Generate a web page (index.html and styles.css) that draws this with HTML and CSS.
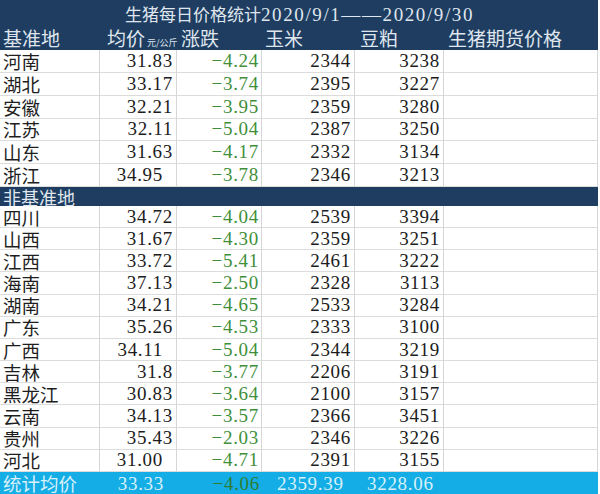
FILE: index.html
```html
<!DOCTYPE html>
<html lang="zh-CN">
<head>
<meta charset="utf-8">
<title>生猪每日价格统计</title>
<link rel="stylesheet" href="styles.css">
</head>
<body>
<div class="sheet">
  <div class="title">生猪每日价格统计<span class="date">2020/9/1——2020/9/30</span></div>
  <div class="grid head">
    <div class="h h0">基准地</div>
    <div class="h h1">均价<span class="unit">元/公斤</span></div>
    <div class="h h2">涨跌</div>
    <div class="h h3">玉米</div>
    <div class="h h4">豆粕</div>
    <div class="h h5">生猪期货价格</div>
  </div>
  <div class="grid body upper">
    <div class="c name">河南</div><div class="c num">31.83</div><div class="c chg">−4.24</div><div class="c num">2344</div><div class="c num">3238</div><div class="c blank"></div>
    <div class="c name">湖北</div><div class="c num">33.17</div><div class="c chg">−3.74</div><div class="c num">2395</div><div class="c num">3227</div><div class="c blank"></div>
    <div class="c name">安徽</div><div class="c num">32.21</div><div class="c chg">−3.95</div><div class="c num">2359</div><div class="c num">3280</div><div class="c blank"></div>
    <div class="c name">江苏</div><div class="c num">32.11</div><div class="c chg">−5.04</div><div class="c num">2387</div><div class="c num">3250</div><div class="c blank"></div>
    <div class="c name">山东</div><div class="c num">31.63</div><div class="c chg">−4.17</div><div class="c num">2332</div><div class="c num">3134</div><div class="c blank"></div>
    <div class="c name">浙江</div><div class="c num ind">34.95</div><div class="c chg">−3.78</div><div class="c num">2346</div><div class="c num">3213</div><div class="c blank"></div>
  </div>
  <div class="band">非基准地</div>
  <div class="grid body lower">
    <div class="c name">四川</div><div class="c num">34.72</div><div class="c chg">−4.04</div><div class="c num">2539</div><div class="c num">3394</div><div class="c blank"></div>
    <div class="c name">山西</div><div class="c num">31.67</div><div class="c chg">−4.30</div><div class="c num">2359</div><div class="c num">3251</div><div class="c blank"></div>
    <div class="c name">江西</div><div class="c num">33.72</div><div class="c chg">−5.41</div><div class="c num">2461</div><div class="c num">3222</div><div class="c blank"></div>
    <div class="c name">海南</div><div class="c num">37.13</div><div class="c chg">−2.50</div><div class="c num">2328</div><div class="c num">3113</div><div class="c blank"></div>
    <div class="c name">湖南</div><div class="c num">34.21</div><div class="c chg">−4.65</div><div class="c num">2533</div><div class="c num">3284</div><div class="c blank"></div>
    <div class="c name">广东</div><div class="c num">35.26</div><div class="c chg">−4.53</div><div class="c num">2333</div><div class="c num">3100</div><div class="c blank"></div>
    <div class="c name">广西</div><div class="c num ind">34.11</div><div class="c chg">−5.04</div><div class="c num">2344</div><div class="c num">3219</div><div class="c blank"></div>
    <div class="c name">吉林</div><div class="c num">31.8</div><div class="c chg">−3.77</div><div class="c num">2206</div><div class="c num">3191</div><div class="c blank"></div>
    <div class="c name">黑龙江</div><div class="c num">30.83</div><div class="c chg">−3.64</div><div class="c num">2100</div><div class="c num">3157</div><div class="c blank"></div>
    <div class="c name">云南</div><div class="c num">34.13</div><div class="c chg">−3.57</div><div class="c num">2366</div><div class="c num">3451</div><div class="c blank"></div>
    <div class="c name">贵州</div><div class="c num">35.43</div><div class="c chg">−2.03</div><div class="c num">2346</div><div class="c num">3226</div><div class="c blank"></div>
    <div class="c name">河北</div><div class="c num ind">31.00</div><div class="c chg">−4.71</div><div class="c num">2391</div><div class="c num">3155</div><div class="c blank"></div>
  </div>
  <div class="grid foot">
    <div class="f fname">统计均价</div>
    <div class="f f1">33.33</div>
    <div class="f f2">−4.06</div>
    <div class="f f3">2359.39</div>
    <div class="f f4">3228.06</div>
    <div class="f"></div>
  </div>
</div>
</body>
</html>
```

FILE: styles.css
```css
html, body {
  margin: 0;
  padding: 0;
  background: #ffffff;
}
body {
  width: 600px;
  height: 494px;
  overflow: hidden;
  font-family: "Liberation Serif", "Noto Sans CJK SC", serif;
}
.sheet {
  width: 598px;
  display: flex;
  flex-direction: column;
}
.title {
  height: 27px;
  background: #1f3d61;
  color: #dfe6ee;
  font-family: "Noto Sans CJK SC", sans-serif;
  font-size: 17px;
  line-height: 28px;
  padding-left: 125px;
  white-space: nowrap;
  overflow: hidden;
}
.date {
  font-family: "Liberation Serif", serif;
  font-size: 19px;
  letter-spacing: 1.6px;
}
.grid {
  display: grid;
  grid-template-columns: 100px 77px 85px 93px 89px 154px;
}
.head {
  height: 23px;
  background: #1f3d61;
  color: #dfe6ee;
  font-family: "Noto Sans CJK SC", sans-serif;
  font-size: 19px;
  line-height: 22px;
  white-space: nowrap;
}
.h0 { padding-left: 3px; }
.h1 { padding-left: 7px; }
.h2 { padding-left: 4px; }
.h3 { padding-left: 3px; }
.h4 { padding-left: 5px; }
.h5 { padding-left: 4px; }
.unit {
  font-size: 9px;
  margin-left: 2px;
}
.upper {
  height: 137px;
  grid-auto-rows: 1fr;
}
.lower {
  height: 266px;
  grid-auto-rows: 1fr;
}
.c {
  border-right: 1px solid #d6d6d6;
  border-bottom: 1px solid #dcdcdc;
  display: flex;
  align-items: center;
  font-size: 19px;
  line-height: 20px;
  white-space: nowrap;
  min-width: 0;
  min-height: 0;
}
.name {
  color: #1e1e1e;
  padding-left: 3px;
  font-family: "Noto Sans CJK SC", sans-serif;
  font-size: 18.5px;
}
.num {
  justify-content: flex-end;
  padding-right: 3px;
  color: #1c1c1c;
  letter-spacing: 0.7px;
}
.num.ind { padding-right: 13px; }
.chg {
  justify-content: flex-end;
  padding-right: 2px;
  color: #3f8f3a;
  letter-spacing: 0.7px;
}
.band {
  height: 19px;
  background: #1f3d61;
  color: #dfe6ee;
  font-family: "Noto Sans CJK SC", sans-serif;
  font-size: 18px;
  line-height: 20px;
  padding-left: 3px;
  overflow: hidden;
}
.foot {
  height: 22px;
  background: #14ade6;
  color: #d8f1fb;
  font-size: 19px;
  line-height: 23px;
  white-space: nowrap;
}
.f { letter-spacing: 0.7px; }
.fname {
  padding-left: 3px;
  font-family: "Noto Sans CJK SC", sans-serif;
  font-size: 18.5px;
  line-height: 22px;
  letter-spacing: 0;
}
.f1 { text-align: right; padding-right: 13px; }
.f2 { text-align: right; padding-right: 2px; color: #2d7d34; }
.f3 { padding-left: 15px; }
.f4 { padding-left: 12px; }
```
